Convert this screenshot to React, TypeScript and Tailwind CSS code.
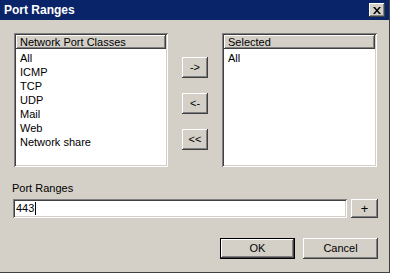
import React from 'react'

const raised =
  'bg-[#d4d0c8] shadow-[inset_-1px_-1px_#404040,inset_1px_1px_#ffffff,inset_-2px_-2px_#808080,inset_2px_2px_#d4d0c8]'
const sunken =
  'bg-white shadow-[inset_1px_1px_#808080,inset_-1px_-1px_#ffffff,inset_2px_2px_#404040,inset_-2px_-2px_#d4d0c8]'

function ListBox({ header, items, width }: { header: string; items: string[]; width: string }) {
  return (
    <div className={`${sunken} ${width} h-[134px] p-[2px] flex flex-col`}>
      <div className={`${raised} h-[14px] px-[4px] text-[11px] leading-[14px] text-black`}>{header}</div>
      <ul className="flex flex-col pt-[2px] pl-[4px]">
        {items.map((item) => (
          <li key={item} className="h-[14px] text-[11px] leading-[14px] text-black">
            {item}
          </li>
        ))}
      </ul>
    </div>
  )
}

function Btn({ label, className = '' }: { label: string; className?: string }) {
  return (
    <button className={`${raised} flex items-center justify-center text-[11px] text-black ${className}`}>
      {label}
    </button>
  )
}

export default function App() {
  const classes = ['All', 'ICMP', 'TCP', 'UDP', 'Mail', 'Web', 'Network share']

  return (
    <div className="w-[393px] h-[276px] bg-white overflow-hidden" style={{ fontFamily: '"Liberation Sans", Arial, sans-serif' }}>
      <div className="w-[390px] h-[273px] bg-[#d4d0c8] border-r border-b border-[#404040] flex flex-col">
        {/* title bar */}
        <div className="h-[20px] bg-[#0a246a] flex items-center justify-between pl-[4px] pr-[4px]">
          <span className="text-white font-bold text-[12px] leading-none">Port Ranges</span>
          <button className={`${raised} w-[16px] h-[14px] flex items-center justify-center`}>
            <svg width="8" height="7" viewBox="0 0 8 7">
              <path d="M0 0h2l2 2.5L6 0h2L5 3.5 8 7H6L4 4.5 2 7H0l3-3.5z" fill="#000" />
            </svg>
          </button>
        </div>

        <div className="flex flex-col pl-[14px] pt-[13px]">
          <div className="flex">
            <ListBox header="Network Port Classes" items={classes} width="w-[154px]" />
            <div className="flex flex-col ml-[14px] mr-[14px] pt-[24px] gap-[15px]">
              <Btn label="->" className="w-[26px] h-[21px]" />
              <Btn label="<-" className="w-[26px] h-[21px]" />
              <Btn label="<<" className="w-[26px] h-[21px]" />
            </div>
            <ListBox header="Selected" items={['All']} width="w-[155px]" />
          </div>

          <div className="mt-[15px] -ml-[2px] text-[11px] leading-[13px] text-black">Port Ranges</div>

          <div className="flex items-center mt-[4px] -ml-[1px]">
            <div className={`${sunken} w-[334px] h-[19px] flex items-center px-[3px]`}>
              <span className="text-[11px] leading-none text-black">443</span>
              <span className="w-px h-[13px] bg-black ml-[1px]" />
            </div>
            <Btn label="+" className="w-[27px] h-[19px] ml-[4px] text-[13px]" />
          </div>

          <div className="flex justify-end gap-[8px] mt-[20px] pr-[11px]">
            <button className="w-[75px] h-[21px] border border-black bg-[#d4d0c8] p-0">
              <div className={`${raised} w-full h-full flex items-center justify-center text-[11px] text-black`}>OK</div>
            </button>
            <Btn label="Cancel" className="w-[75px] h-[21px]" />
          </div>
        </div>
      </div>
    </div>
  )
}
